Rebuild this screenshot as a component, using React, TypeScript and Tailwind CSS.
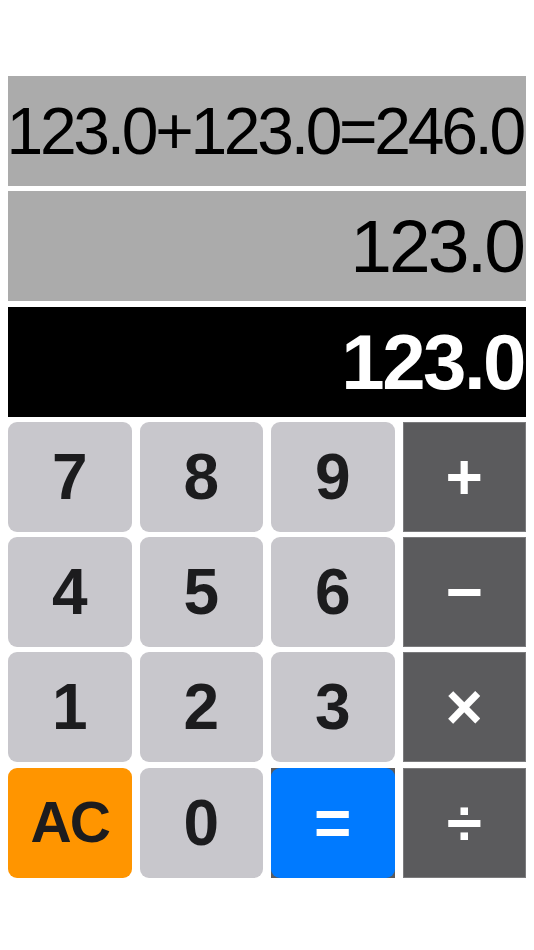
import React from 'react';

type Key = { label: string; kind: 'digit' | 'op' | 'clear' | 'equals' };

const keys: Key[] = [
  { label: '7', kind: 'digit' },
  { label: '8', kind: 'digit' },
  { label: '9', kind: 'digit' },
  { label: '+', kind: 'op' },
  { label: '4', kind: 'digit' },
  { label: '5', kind: 'digit' },
  { label: '6', kind: 'digit' },
  { label: '−', kind: 'op' },
  { label: '1', kind: 'digit' },
  { label: '2', kind: 'digit' },
  { label: '3', kind: 'digit' },
  { label: '×', kind: 'op' },
  { label: 'AC', kind: 'clear' },
  { label: '0', kind: 'digit' },
  { label: '=', kind: 'equals' },
  { label: '÷', kind: 'op' },
];

const KeyButton = ({ k }: { k: Key }) => {
  const base = 'flex h-[110px] items-center justify-center font-bold leading-none';
  if (k.kind === 'op') {
    return <div className={`${base} border border-[#7b7b7d] bg-[#5b5b5d] text-[64px] text-white`}>{k.label}</div>;
  }
  if (k.kind === 'equals') {
    return (
      <div className="h-[110px] bg-[#5b5b5d]">
        <div className={`${base} rounded-[9px] bg-[#007aff] text-[64px] text-white`}>{k.label}</div>
      </div>
    );
  }
  if (k.kind === 'clear') {
    return (
      <div className={`${base} rounded-[9px] bg-[#ff9500] text-[57px] tracking-[-2px] text-[#1c1c1e]`}>{k.label}</div>
    );
  }
  return <div className={`${base} rounded-[9px] bg-[#c8c7cc] text-[64px] text-[#1c1c1e]`}>{k.label}</div>;
};

export default function App() {
  return (
    <div className="min-h-[950px] bg-white px-2 pt-[76px] font-['Liberation_Sans',Arial,sans-serif]">
      <div className="flex flex-col gap-[5.3px]">
        <div className="flex h-[110px] items-center justify-end overflow-hidden bg-[#ababab] pr-[3px] text-[66px] leading-none tracking-[-3.3px] text-black">
          123.0+123.0=246.0
        </div>
        <div className="flex h-[110px] items-center justify-end overflow-hidden bg-[#ababab] pr-[3px] text-[75px] leading-none tracking-[-3px] text-black">
          123.0
        </div>
        <div className="flex h-[110px] items-center justify-end overflow-hidden bg-black pr-[2px] text-[78px] font-bold leading-none tracking-[-2.5px] text-white">
          123.0
        </div>
        <div className="grid grid-cols-4 gap-x-2 gap-y-[5.3px]">
          {keys.map((k) => (
            <KeyButton key={k.label} k={k} />
          ))}
        </div>
      </div>
    </div>
  );
}
